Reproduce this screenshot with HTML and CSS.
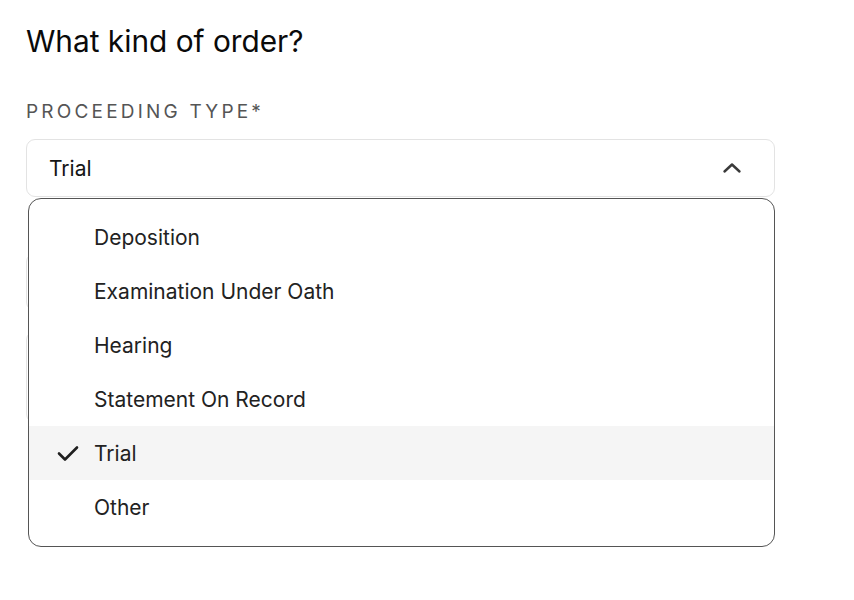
FILE: index.html
```html
<!DOCTYPE html>
<html lang="en">
<head>
<meta charset="utf-8">
<title>What kind of order?</title>
<link rel="stylesheet" href="styles.css">
</head>
<body>
<main class="form">
  <h1 class="title">What kind of order?</h1>
  <div class="label">PROCEEDING TYPE*</div>
  <div class="select-wrap">
    <div class="select">
      <span class="select-value">Trial</span>
      <svg class="chevron" width="24" height="24" viewBox="0 0 24 24" fill="none" stroke="#3a3a3a" stroke-width="2.4" stroke-linecap="round" stroke-linejoin="round"><path d="M4.5 15.5l7.5-7 7.5 7"/></svg>
    </div>
    <ul class="menu">
      <li class="option"><span class="check"></span>Deposition</li>
      <li class="option"><span class="check"></span>Examination Under Oath</li>
      <li class="option"><span class="check"></span>Hearing</li>
      <li class="option"><span class="check"></span>Statement On Record</li>
      <li class="option selected"><span class="check"><svg width="24" height="24" viewBox="0 0 24 24" fill="none" stroke="#1f1f1f" stroke-width="2.6" stroke-linecap="round" stroke-linejoin="round"><path d="M3 12.5l6 6L21 6.5"/></svg></span>Trial</li>
      <li class="option"><span class="check"></span>Other</li>
    </ul>
  </div>
  <div class="field field-a"></div>
  <div class="field field-b"></div>
</main>
</body>
</html>
```

FILE: styles.css
```css
* { box-sizing: border-box; }
html, body { margin: 0; padding: 0; background: #ffffff; }
body {
  min-height: 600px;
  font-family: Inter, "Noto Sans", "Liberation Sans", sans-serif;
  color: #111;
}
.form {
  width: 775px;
  padding: 24px 0 0 26px;
}
.title {
  margin: 0;
  font-size: 29.8px;
  line-height: 34px;
  font-weight: 400;
  color: #0a0a0a;
}
.label {
  margin-top: 43px;
  font-size: 19px;
  line-height: 22px;
  letter-spacing: 3.2px;
  color: #555;
  font-weight: 400;
}
.select-wrap {
  position: relative;
  margin-top: 16px;
}
.select {
  height: 58px;
  border: 1px solid #e3e3e3;
  border-radius: 9px;
  display: flex;
  align-items: center;
  justify-content: space-between;
  padding: 0 30px 0 22px;
  background: #fff;
}
.select-value {
  font-size: 21px;
  color: #151515;
}
.chevron { display: block; }
.menu {
  position: absolute;
  top: calc(100% + 1px);
  left: 2px;
  right: 0;
  margin: 0;
  padding: 11px 0 12px;
  list-style: none;
  background: #fff;
  border: 1.5px solid #555;
  border-radius: 13px;
  z-index: 2;
}
.option {
  height: 54px;
  display: flex;
  align-items: center;
  padding-left: 27px;
  font-size: 21px;
  color: #222;
}
.option.selected { background: #f5f5f5; }
.check {
  width: 24px;
  height: 24px;
  margin-right: 14px;
  display: flex;
}
.field {
  border: 1px solid #e3e3e3;
  border-radius: 9px;
  height: 58px;
}
.field-a { margin-top: 56px; }
.field-b { margin-top: 20px; height: 92px; }
```
